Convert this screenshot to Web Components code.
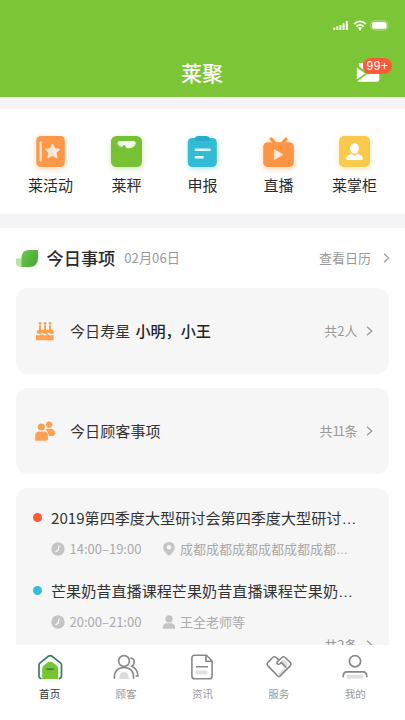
<!DOCTYPE html>
<html lang="zh-CN">
<head>
<meta charset="utf-8">
<title>莱聚</title>
<style>
html,body{margin:0;height:100%;background:#fff}
body{font-family:"Noto Sans CJK SC","Liberation Sans",sans-serif;color:#333;overflow:hidden}
</style>
</head>
<body>
<home-page></home-page>
<script>
const icons = {
  signal: ['0 0 16 11', '<g fill="#fff"><rect x=".3" y="7.5" width="2" height="2.5" rx=".4"/><rect x="3.4" y="6.3" width="2" height="3.7" rx=".4"/><rect x="6.5" y="5" width="2" height="5" rx=".4"/><rect x="9.6" y="3.2" width="2" height="6.8" rx=".4"/><rect x="12.8" y="1" width="2.1" height="9" rx=".4"/></g>'],
  wifi: ['0 0 14 11', '<g fill="none" stroke="#fff" stroke-width="1.7"><path d="M1 4.1Q7-1.4 13 4.1"/><path d="M3.4 6.5Q7 3.3 10.6 6.5"/></g><path fill="#fff" d="M4.9 8Q7 6.2 9.1 8L7 10.4z"/>'],
  battery: ['0 0 20 11', '<rect x=".8" y=".8" width="17" height="9.2" rx="3.6" fill="none" stroke="#b5df8b" stroke-width=".9"/><rect x="2" y="2" width="14.6" height="6.8" rx="2.6" fill="#fff"/>'],
  mail: ['0 0 24 20', '<path fill="#fff" d="M3.2 0h4v6.5l-4-3zM.8 4.600 9.200 10.600 .8 16.500zM1.300 18.200 11 11.200h2.500l4-2H23.300V16.500q0 2.200-2.200 2.200H2.500z"/>'],
  activity: ['0 0 31 31', '<rect x="1.300" y="0" width="28.500" height="31" rx="4.500" fill="#fd9848"/><path d="M5.700 6.500v18" stroke="#ffe2c9" stroke-width="2.300" stroke-linecap="round"/><path d="m17.500 8 2.200 4.500 5 .8-3.600 3.500.9 5-4.500-2.400-4.500 2.400.9-5-3.600-3.500 5-.8z" fill="#ffe8d3" stroke="#ffe8d3" stroke-linejoin="round"/>'],
  scale: ['0 0 31 31', '<rect width="31" height="31" rx="5.500" fill="#75c234"/><path d="M9 5h13q2.700 0 2.700 2.300Q24 12 18.500 12.200H15.500L14 9.500Q13 7.800 12 9.500L11.500 11Q7 10.500 6.500 7.500 6.500 5 9 5z" fill="#effae6"/>'],
  report: ['0 0 31 31', '<rect x=".8" y="2" width="29" height="29" rx="4.500" fill="#32bbd5"/><path d="M7.500 2.500Q8.500 0 11 0h8.500q2.500 0 3.500 2.500l-1 2.500H8.500z" fill="#27abc8"/><path d="M8.700 13.700h14M8.700 21.300h7" stroke="#e4fbff" stroke-width="2.400" stroke-linecap="round"/>'],
  live: ['0 0 31 31', '<path d="m8.300 3 3.800 4.600M23 3l-3.800 4.600" stroke="#fd9545" stroke-width="3.200" stroke-linecap="round"/><rect x=".2" y="6.200" width="30.600" height="24.800" rx="4.500" fill="#fd9545"/><path d="m11.300 13.800 8.500 4.800-8.500 4.800z" fill="#ffe8d3" stroke="#ffe8d3" stroke-linejoin="round"/>'],
  shop: ['0 0 31 31', '<rect width="31" height="31" rx="5" fill="#fbc94c"/><ellipse cx="15.500" cy="12.300" rx="4.400" ry="5.300" fill="#fff"/><path fill="#fff" d="M12.700 17.500 15.500 20l2.800-2.500 4.200 2.300q1.400 1 1.300 3-.1 1.200-1.300 1.200h-14q-1.200 0-1.300-1.200-.1-2 1.300-3z"/>'],
  leaf: ['0 0 22 17', '<defs><linearGradient id="g" x2="1" y2=".6"><stop stop-color="#6bcb48"/><stop offset="1" stop-color="#4baa36"/></linearGradient></defs><path d="M0 8.500h8q4 0 4 4V17H4.500Q0 17 0 12.500z" fill="#b8e5a6"/><path d="M13 0h9v7.500q0 9.500-9 9.500H5.500V8q0-8 7.500-8z" fill="url(#g)"/>'],
  next: ['0 0 7 10', '<path d="m1 .8 4.800 4.200L1 9.200" fill="none" stroke="#999" stroke-width="1.200"/>'],
  cake: ['0 0 20 20', '<g fill="#fea052"><path d="M4 4.200h2v4.500h3V4.200h2v4.500h3V4.200h2v4.500h.6q2.100 0 2.100 2v1.600q-1.500 1.400-3.100.2-1.600-1.300-3.100 0-1.600 1.200-3.200 0-1.500-1.200-3.100 0-1.600 1.200-4.400-.3v-1.500q0-2 2.100-2H4z"/><circle cx="5" cy="2.300" r="1.400"/><circle cx="10" cy="2.300" r="1.400"/><circle cx="15" cy="2.300" r="1.400"/><path d="M.9 13.700q2.400 1.200 4 .1 1.500-1.100 3 0 1.600 1.200 3.200 0 1.500-1.100 3 0 1.600 1.100 4.600.1v5.300H.9z"/></g>'],
  people: ['0 0 20 20', '<g fill="#fea052"><circle cx="14.200" cy="3.700" r="3.100"/><path d="M11 7.800h4.500q4.400.3 4.400 4.700 0 2.500-2.500 2.500h-4z"/><g stroke="#f6f6f7" stroke-width="1.200" paint-order="stroke"><circle cx="6.300" cy="6" r="3.600"/><path d="M.2 19.700V15q0-4.600 4.300-4.600h4.200q4.300 0 4.300 4.600v2.500q0 2.200-2.200 2.200z"/></g></g>'],
  clock: ['0 0 14 14', '<circle cx="7" cy="7" r="6.700" fill="#c4c4c4"/><path d="M8 3.500 7.300 8 4.500 10" fill="none" stroke="#fff" stroke-width="1.200"/>'],
  pin: ['0 0 14 15', '<path d="M7 0q6.200.2 6.200 5.900Q13 10.200 7 15 1 10.200.8 5.900.8.2 7 0z" fill="#c4c4c4"/><circle cx="7" cy="5.600" r="2.500" fill="#f6f6f6"/>'],
  person: ['0 0 14 14', '<circle cx="7" cy="3.900" r="3.600" fill="#c4c4c4"/><path d="M.7 13.700Q.8 8.200 5 8.200h4q4.200 0 4.300 5.500z" fill="#c4c4c4"/>'],
  home: ['0 0 26 26', '<path d="M5.200 25V14.500q0-2 1.800-3.200L11 8.200q2.200-1.600 4.400 0l4 3.100q1.800 1.200 1.800 3.200V25z" fill="#76c52e"/><path d="M4.500 24.600Q2 24.200 2 22V11.200q0-1.400 1.100-2.300L11.400 2.300q1.800-1.300 3.600 0l8.400 6.600q1.100.9 1.100 2.300V22q0 2.200-2.600 2.600" fill="none" stroke="#387f65" stroke-width="1.700"/><path d="M9.500 15.200h7.500" stroke="#387f65" stroke-width="1.700"/>'],
  customers: ['0 0 26 26', '<path d="M6 25q.3-7 5-7t5 7z" fill="#dcdcdc"/><g fill="none" stroke="#888" stroke-width="1.600" stroke-linecap="round"><circle cx="11" cy="7" r="5.400"/><path d="M1.300 24.300Q1.300 13.500 11 13.500T20.700 24.300M18 4q4.200 1.200 3 5.500-.4 1.600-2.100 2.700 5.800 2.500 6 9.800h-1.700"/></g>'],
  news: ['0 0 26 26', '<path d="M6.500 16.500h12v4h-12z" fill="#e0e0e0"/><g fill="none" stroke="#888" stroke-width="1.600"><path d="M17.500 1.300H5.700q-2.800 0-2.800 2.800v17.800q0 2.800 2.800 2.800h14.600q2.800 0 2.800-2.800V7zM17 1.700v5.500h5.800M7 12.700h12"/></g>'],
  service: ['0 0 28 26', '<path d="m15 8 4-3 5 5-4 4zM13 20l7-6 2 2-7 7z" fill="#ddd"/><g fill="none" stroke="#858585" stroke-width="1.700" stroke-linejoin="round" stroke-linecap="round"><path d="M14 5.300 10.500 2.500Q9 1.300 7.500 2.500L1.800 8.500q-1.200 1.500 0 3L13 23q1 1 2 0L26.300 11.500q1.200-1.500 0-3L20.500 2.500Q19 1.300 17.500 2.500l-5.500 5q-1 2 1 2.500 2 .3 3.500-2l5 5.300"/></g>'],
  mine: ['0 0 26 26', '<path d="M5 20.700h16.500v4H5z" fill="#e0e0e0"/><g fill="none" stroke="#888" stroke-width="1.700" stroke-linecap="round"><circle cx="13" cy="7.200" r="5.600"/><path d="M1.200 22.500q0-4.700 3.700-4.700h16.200q3.700 0 3.700 4.700"/></g>']
};

function define(name, css, markup) {
  customElements.define(name, class extends HTMLElement {
    constructor() {
      super();
      const tpl = document.createElement('template');
      tpl.innerHTML = `<style>*{box-sizing:border-box}:host{box-sizing:border-box}${css}</style>${typeof markup === 'function' ? markup(this) : markup}`;
      this.attachShadow({mode: 'open'}).append(tpl.content.cloneNode(true));
    }
  });
}

customElements.define('app-icon', class extends HTMLElement {
  connectedCallback() {
    if (this.shadowRoot) return;
    const [box, body] = icons[this.getAttribute('name')];
    this.attachShadow({mode: 'open'}).innerHTML =
      `<style>:host{display:block;flex:none}svg{display:block;width:100%;height:100%;overflow:visible}</style><svg viewBox="${box}">${body}</svg>`;
  }
});

define('app-header', `
:host{display:flex;flex-direction:column;height:97px;background:#7bc537;color:#fff}
.status{flex:none;display:flex;justify-content:flex-end;align-items:center;gap:3.500px;padding:20px 15px 0 0;height:31px}
.bar{flex:none;display:grid;grid-template-columns:1fr auto 1fr;align-items:center;height:48px;margin-top:17px;padding-right:25px}
h1{grid-column:2;margin:0;font-size:21px;line-height:30px;font-weight:500;transform:translateX(12px)}
.mail{justify-self:end;position:relative;margin-top:2px}
.badge{position:absolute;left:7px;top:-5px;width:29px;height:16px;border-radius:8px;background:#fb5b38;font:12px/16px "Liberation Sans",sans-serif;text-align:center;letter-spacing:.5px}
`, `<div class="status"><app-icon name="signal" style="width:16px;height:11px"></app-icon><app-icon name="wifi" style="width:14px;height:11px"></app-icon><app-icon name="battery" style="width:20px;height:11px"></app-icon></div>
<div class="bar"><h1><slot></slot></h1><div class="mail"><app-icon name="mail" style="width:24px;height:20px"></app-icon><span class="badge">99+</span></div></div>`);

define('quick-item', `
:host{display:flex;flex-direction:column;align-items:center;gap:7px;font-size:15px;line-height:22px;color:#2b2b2b;white-space:nowrap}
.i{width:31px;height:31px;filter:drop-shadow(0 2px 3px var(--glow))}
app-icon{width:31px;height:31px}
`, el => `<div class="i"><app-icon name="${el.getAttribute('icon')}"></app-icon></div><span><slot></slot></span>`);

define('quick-menu', `
:host{display:grid;grid-template-columns:repeat(5,76px);justify-content:center;height:131px;padding-top:27px;background:#fff;border-top:12px solid #f4f3f5;border-bottom:14px solid #f4f3f5}
`, '<slot></slot>');

define('more-link', `
:host{display:flex;align-items:center;font-size:13px;line-height:18px;color:#999;gap:var(--gap,8px);white-space:nowrap}
::slotted(.tight),.tight{letter-spacing:-1.800px;margin-right:1.800px}
app-icon{width:7px;height:10px}
`, '<span><slot></slot></span><app-icon name="next"></app-icon>');

define('section-head', `
:host{display:flex;align-items:center;height:60px;padding:0 15px 0 16px}
app-icon{width:22px;height:17px}
h2{margin:0 9px 0 8.500px;font-size:17.200px;line-height:24px;font-weight:500;color:#2b2b2b}
time{font-size:13.200px;line-height:18px;color:#999}
more-link{margin-left:auto;--gap:12px}
`, '<app-icon name="leaf"></app-icon><h2><slot></slot></h2><time><slot name="date"></slot></time><more-link>查看日历</more-link>');

define('summary-card', `
:host{display:flex;align-items:center;height:86px;margin:0 16.500px 14px 16px;padding:0 16px 0 19px;border-radius:12px;background:#f6f6f7;font-size:15.100px;line-height:22px}
app-icon{width:20px;height:20px;margin-right:15px}
.t{margin-top:-2px}
::slotted(b){font-weight:500;margin-left:5px;color:#222}
more-link{margin-left:auto}
i{font-style:normal;letter-spacing:-1.800px;margin-right:1.200px}
`, el => `<app-icon name="${el.getAttribute('icon')}"></app-icon><span class="t"><slot></slot></span><more-link>${el.getAttribute('more').replace('11', '<i>11</i>')}</more-link>`);

define('event-item', `
:host{display:grid;flex:none;grid-template-columns:9px 1fr;grid-template-rows:22px 20px;column-gap:9px;align-items:center;row-gap:11px}
.dot{width:9px;height:9px;border-radius:50%;background:var(--dot)}
h3{margin:0;height:22px;font-size:15.120px;line-height:22px;font-weight:400;white-space:nowrap;color:#333}
.meta{grid-column:2;height:20px;display:flex;align-items:center;font-size:13px;line-height:20px;color:#aaa;white-space:nowrap}
.time{width:111px;display:flex;align-items:center;gap:4.500px}
.place{display:flex;align-items:center;gap:4px}
app-icon{width:14px;height:14px}
.e{font-family:"Liberation Sans",sans-serif;line-height:1}
.meta .e{font-size:12px}
`, el => {
  const dots = s => s.replace('…', '<span class="e">…</span>');
  const a = n => dots(el.getAttribute(n));
  return `<i class="dot"></i><h3>${a('heading')}</h3><div class="meta"><span class="time"><app-icon name="clock"></app-icon>${a('time')}</span><span class="place"><app-icon name="${a('icon')}"></app-icon><span>${a('place')}</span></span></div>`;
});

define('event-list', `
:host{display:flex;flex-direction:column;gap:20px;height:157px;overflow:hidden;margin:0 16.500px 0 16px;padding:18px 16px 0 17px;border-radius:12px 12px 0 0;background:#f6f6f7}
more-link{align-self:flex-end;margin-top:-16px;flex:none}
`, '<slot></slot><more-link>共2条</more-link>');

define('tab-item', `
:host{display:flex;flex-direction:column;align-items:center;gap:6px;font-size:10.600px;line-height:16px;color:#999}
:host([active]){color:#333}
app-icon{width:26px;height:26px}
`, el => `<app-icon name="${el.getAttribute('icon')}"></app-icon><span><slot></slot></span>`);

define('tab-bar', `
:host{display:grid;grid-template-columns:repeat(5,76.400px);justify-content:center;height:75px;padding-top:9px;background:#fff}
`, '<slot></slot>');

define('home-page', `
:host{display:flex;flex-direction:column;height:720px;width:405px;overflow:hidden;background:#fff}
main{height:417px;flex:none;overflow:hidden}
app-header,quick-menu,tab-bar{flex:none}
`, `<app-header>莱聚</app-header>
<quick-menu>
<quick-item icon="activity" style="--glow:#fd984866">莱活动</quick-item>
<quick-item icon="scale" style="--glow:#75c23455">莱秤</quick-item>
<quick-item icon="report" style="--glow:#32bbd555">申报</quick-item>
<quick-item icon="live" style="--glow:#fd954566">直播</quick-item>
<quick-item icon="shop" style="--glow:#fbc94c66">莱掌柜</quick-item>
</quick-menu>
<main>
<section-head>今日事项<span slot="date">02月06日</span></section-head>
<summary-card icon="cake" more="共2人">今日寿星<b>小明，小王</b></summary-card>
<summary-card icon="people" more="共11条">今日顾客事项</summary-card>
<event-list>
<event-item style="--dot:#fb5b38" heading="2019第四季度大型研讨会第四季度大型研讨…" time="14:00–19:00" icon="pin" place="成都成都成都成都成都成都…"></event-item>
<event-item style="--dot:#35bdd8" heading="芒果奶昔直播课程芒果奶昔直播课程芒果奶…" time="20:00–21:00" icon="person" place="王全老师等"></event-item>
</event-list>
</main>
<tab-bar>
<tab-item icon="home" active>首页</tab-item>
<tab-item icon="customers">顾客</tab-item>
<tab-item icon="news">资讯</tab-item>
<tab-item icon="service">服务</tab-item>
<tab-item icon="mine">我的</tab-item>
</tab-bar>`);
</script>
</body>
</html>
